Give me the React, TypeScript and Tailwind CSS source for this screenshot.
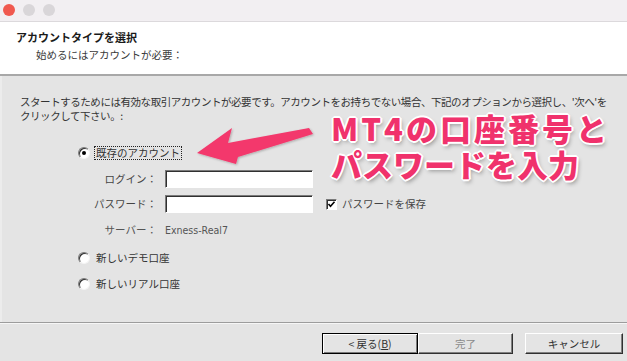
import React from "react";

function Radio({ checked }: { checked?: boolean }) {
  return (
    <span className="relative inline-block w-[12px] h-[12px] rounded-full bg-white border border-t-[#7a7a7a] border-l-[#7a7a7a] border-r-[#f4f4f4] border-b-[#f4f4f4] shadow-[inset_1px_1px_0_#303030]">
      {checked && (
        <span className="absolute left-[3px] top-[3px] w-[4px] h-[4px] rounded-full bg-black" />
      )}
    </span>
  );
}

function Input() {
  return (
    <div className="w-[148px] h-[18px] bg-white border border-t-[#7a7a7a] border-l-[#7a7a7a] border-r-white border-b-white shadow-[inset_1px_1px_0_#303030]" />
  );
}

export default function App() {
  return (
    <div className="relative w-[627px] h-[361px] overflow-hidden flex flex-col bg-[#e4e4e4] text-[#2e2e2e] [font-family:'Noto_Sans_CJK_JP','Noto_Sans',sans-serif]">
      {/* title bar */}
      <div className="h-[22px] shrink-0 flex items-center gap-[8px] pl-[3px] pb-[1px] bg-[#f2eff2] border-b border-[#dcd9dc]">
        <span className="w-[12px] h-[12px] rounded-full bg-[#f0594f]" />
        <span className="w-[12px] h-[12px] rounded-full bg-[#d9d6d9]" />
        <span className="w-[12px] h-[12px] rounded-full bg-[#d9d6d9]" />
      </div>
      {/* header */}
      <div className="h-[54px] shrink-0 bg-white border-b-2 border-[#a8a8a8] pl-[16px] pt-[8px]">
        <div className="text-[11px] leading-[14px] font-bold text-[#1a1a1a]">アカウントタイプを選択</div>
        <div className="mt-[4px] pl-[20px] text-[10.5px] leading-[14px] text-[#3a3a3a]">始めるにはアカウントが必要：</div>
      </div>
      {/* body */}
      <div className="flex-1 border-l-2 border-l-[#ececec] pl-[18px] pt-[19px] text-[10.5px] leading-[14px]">
        <p className="tracking-[-0.45px] text-[#333]">
          スタートするためには有効な取引アカウントが必要です。アカウントをお持ちでない場合、下記のオプションから選択し、'次へ'を
          <br />
          クリックして下さい。:
        </p>
        <div className="mt-[22px] ml-[58px] h-[16px] flex items-center gap-[4px]">
          <Radio checked />
          <span className="border border-dotted border-[#222] px-[1px] leading-[12px] text-[#333]">既存のアカウント</span>
        </div>
        <div className="mt-[9px] flex items-center">
          <span className="w-[137px] text-right text-[#444]">ログイン：</span>
          <span className="ml-[8px]"><Input /></span>
        </div>
        <div className="mt-[7px] flex items-center">
          <span className="w-[137px] text-right text-[#444]">パスワード：</span>
          <span className="ml-[8px]"><Input /></span>
          <span className="ml-[13px] w-[11px] h-[11px] bg-white border border-t-[#7a7a7a] border-l-[#7a7a7a] border-r-white border-b-white shadow-[inset_1px_1px_0_#303030] flex items-center justify-center">
            <svg width="9" height="9" viewBox="0 0 9 9">
              <path d="M1.5 4 L3.5 6.2 L7.5 1.8" fill="none" stroke="#000" strokeWidth="1.6" />
            </svg>
          </span>
          <span className="ml-[5px] text-[#444]">パスワードを保存</span>
        </div>
        <div className="mt-[10px] flex items-center text-[#555]">
          <span className="w-[137px] text-right">サーバー：</span>
          <span className="ml-[8px] [font-family:'DejaVu_Sans_Condensed','Liberation_Sans',sans-serif] text-[10.5px]">Exness-Real7</span>
        </div>
        <div className="mt-[13px] ml-[58px] h-[16px] flex items-center gap-[6px] text-[#333]">
          <Radio />
          <span>新しいデモ口座</span>
        </div>
        <div className="mt-[10px] ml-[58px] h-[16px] flex items-center gap-[6px] text-[#333]">
          <Radio />
          <span>新しいリアル口座</span>
        </div>
      </div>
      {/* footer */}
      <div className="h-[39px] shrink-0 border-t border-[#9c9c9c] shadow-[inset_0_1px_0_#f6f6f6] flex justify-end items-start pt-[10px] pr-[4px] text-[10.5px]">
        <button className="w-[96px] h-[21px] border border-black bg-[#e4e4e4] shadow-[inset_1px_1px_0_#fff,inset_-1px_-1px_0_#7a7a7a] text-[#333]">
          &lt; 戻る(<span className="underline">B</span>)
        </button>
        <button className="w-[95px] h-[21px] border border-t-white border-l-white border-r-[#303030] border-b-[#303030] bg-[#e4e4e4] shadow-[inset_-1px_-1px_0_#808080] text-[#8a8a8a]">
          完了
        </button>
        <button className="ml-[12px] w-[98px] h-[21px] border border-t-white border-l-white border-r-[#303030] border-b-[#303030] bg-[#e4e4e4] shadow-[inset_-1px_-1px_0_#808080] text-[#333]">
          キャンセル
        </button>
      </div>

      {/* annotation arrow */}
      <svg className="absolute left-0 top-0 pointer-events-none" width="627" height="361" viewBox="0 0 627 361">
        <defs>
          <filter id="sh" x="-20%" y="-20%" width="140%" height="140%">
            <feDropShadow dx="1" dy="1" stdDeviation="1.2" floodColor="#000" floodOpacity="0.25" />
          </filter>
        </defs>
        <path
          d="M197 153 L232 128 L228 143 L309 128 L313 134 L238 157 L236 164 Z"
          fill="#f3396c"
          filter="url(#sh)"
        />
      </svg>

      {/* annotation text */}
      <div className="absolute left-[331px] top-[110px] text-[31px] leading-[36px] font-black text-[#f0326c] [text-shadow:0_0_2px_#fff,1px_1px_0_#fff,-1px_-1px_0_#fff,1px_-1px_0_#fff,-1px_1px_0_#fff,2px_0_0_#fff,-2px_0_0_#fff,0_2px_0_#fff,0_-2px_0_#fff,2px_3px_4px_rgba(0,0,0,0.35)]">
        <div className="tracking-[3px] whitespace-nowrap">MT4の口座番号と</div>
        <div className="whitespace-nowrap">パスワードを入力</div>
      </div>
    </div>
  );
}
